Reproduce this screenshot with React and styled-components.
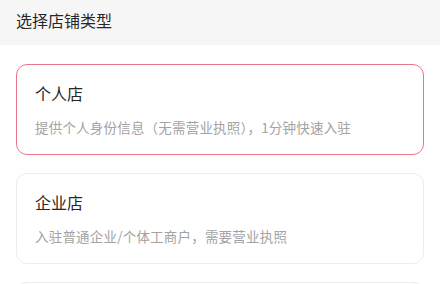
import React from "react";
import styled, { createGlobalStyle } from "styled-components";

const GlobalStyle = createGlobalStyle`
  body {
    margin: 0;
    background: #ffffff;
    font-family: "Noto Sans CJK SC", "Noto Sans", sans-serif;
  }
`;

const Header = styled.div`
  height: 45px;
  background: #f6f6f6;
  display: flex;
  align-items: center;
  padding: 0 16px 6px;
  box-sizing: border-box;
  font-size: 16px;
  color: #262626;
`;

const List = styled.div`
  display: flex;
  flex-direction: column;
  gap: 18px;
  padding: 19px 16px;
`;

const Card = styled.div`
  border: 1px solid ${(p) => (p.$active ? "#e9768d" : "#ececec")};
  border-radius: 11px;
  padding: 17px 18px;
  min-height: 55px;
  display: flex;
  flex-direction: column;
  gap: 13px;
  background: #fff;
`;

const Title = styled.div`
  font-size: 16px;
  line-height: 22px;
  color: #262626;
`;

const Desc = styled.div`
  font-size: 13.5px;
  line-height: 20px;
  letter-spacing: 0.2px;
  color: #a3a3a3;
`;

const shops = [
  { title: "个人店", desc: "提供个人身份信息（无需营业执照），1分钟快速入驻", active: true },
  { title: "企业店", desc: "入驻普通企业/个体工商户，需要营业执照" },
  {},
];

export default function App() {
  return (
    <>
      <GlobalStyle />
      <Header>选择店铺类型</Header>
      <List>
        {shops.map((s, i) => (
          <Card key={i} $active={s.active}>
            {s.title && <Title>{s.title}</Title>}
            {s.desc && <Desc>{s.desc}</Desc>}
          </Card>
        ))}
      </List>
    </>
  );
}
